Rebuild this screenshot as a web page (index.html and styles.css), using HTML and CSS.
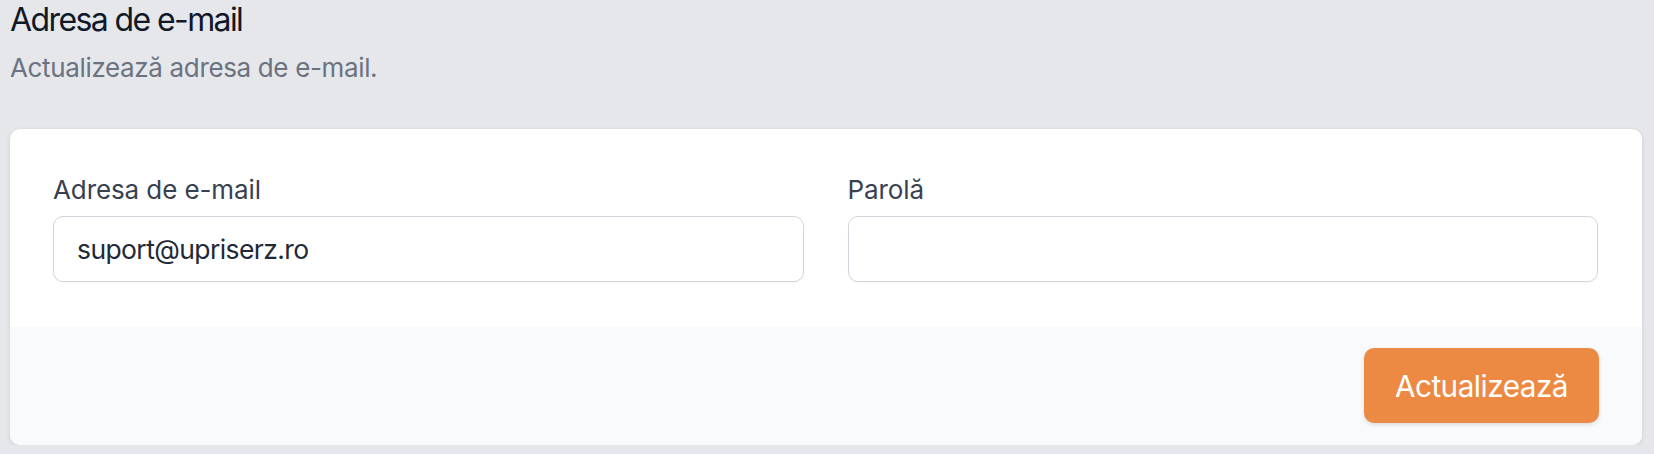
FILE: index.html
```html
<!DOCTYPE html>
<html lang="ro">
<head>
    <meta charset="UTF-8">
    <meta name="viewport" content="width=device-width, initial-scale=1.0">
    <title>Adresa de e-mail</title>
    <link rel="stylesheet" href="styles.css">
</head>
<body>
    <div class="section">
        <div class="section-title">
            <h3>Adresa de e-mail</h3>
            <p>Actualizează adresa de e-mail.</p>
        </div>

        <form class="card">
            <div class="card-body">
                <div class="field">
                    <label for="email">Adresa de e-mail</label>
                    <input id="email" type="email" value="suport@upriserz.ro">
                </div>
                <div class="field">
                    <label for="password">Parolă</label>
                    <input id="password" type="password">
                </div>
            </div>
            <div class="card-footer">
                <button type="submit">Actualizează</button>
            </div>
        </form>
    </div>
</body>
</html>
```

FILE: styles.css
```css
body {
    margin: 0;
    background-color: #e5e7eb;
    font-family: Inter, "Noto Sans", sans-serif;
}
.section {
    margin: -6px 12px 0 10px;
}
.section-title h3 {
    margin: 0;
    font-size: 32px;
    line-height: 52px;
    font-weight: 400;
    letter-spacing: -1.6px;
    color: #111827;
}
.section-title p {
    margin: 3px 0 0;
    font-size: 26px;
    line-height: 37px;
    letter-spacing: -0.35px;
    color: #6b7280;
}
.card {
    margin-top: 43px;
    background-color: #fff;
    border-radius: 10px;
    box-shadow: 0 1px 4px rgba(0, 0, 0, 0.12);
    overflow: hidden;
}
.card-body {
    display: grid;
    grid-template-columns: 1fr 1fr;
    column-gap: 44px;
    padding: 42px 44px 45px 43px;
}
.field label {
    display: block;
    font-size: 26px;
    line-height: 37px;
    letter-spacing: -0.1px;
    color: #374151;
}
.field input {
    display: block;
    box-sizing: border-box;
    width: 100%;
    height: 66px;
    margin-top: 8px;
    padding: 0 23px;
    border: 1px solid #d1d5db;
    border-radius: 10px;
    font-family: inherit;
    font-size: 26.5px;
    letter-spacing: -0.6px;
    color: #1f2937;
    box-shadow: 0 1px 2px rgba(0, 0, 0, 0.04);
}
.card-footer {
    display: flex;
    justify-content: flex-end;
    padding: 21px 43px 22px;
    background-color: #f9fafb;
}
.card-footer button {
    height: 75px;
    padding: 0 31px;
    border: none;
    border-radius: 10px;
    background-color: #ec8a44;
    color: #fff;
    font-family: inherit;
    font-size: 29.7px;
    letter-spacing: -0.5px;
    box-shadow: 0 2px 4px rgba(0, 0, 0, 0.12);
    cursor: pointer;
}
```
